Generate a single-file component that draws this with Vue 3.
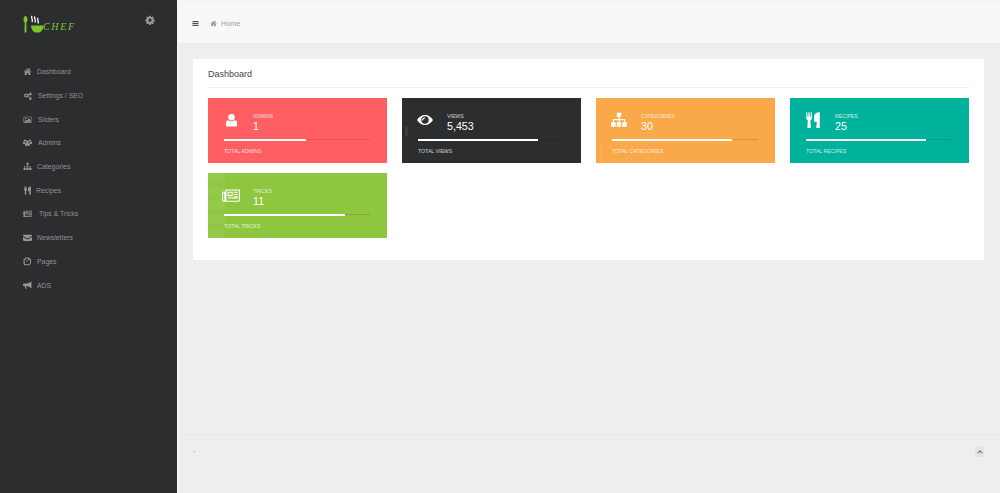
<script setup>
const nav = [
  { label: 'Dashboard', icon: 'home', gap: 5 },
  { label: 'Settings / SEO', icon: 'cogs', gap: 6 },
  { label: 'Sliders', icon: 'image', gap: 6 },
  { label: 'Admins', icon: 'users', gap: 6 },
  { label: 'Categories', icon: 'sitemap', gap: 5 },
  { label: 'Recipes', icon: 'cutlery', gap: 4 },
  { label: 'Tips & Tricks', icon: 'news', gap: 7 },
  { label: 'Newsletters', icon: 'mail', gap: 5 },
  { label: 'Pages', icon: 'pages', gap: 5 },
  { label: 'ADS', icon: 'bullhorn', gap: 5 },
]
const cards = [
  { title: 'ADMINS', value: '1', total: 'TOTAL ADMINS', icon: 'user', cls: 'red', pct: 56, size: 15, ml: 0 },
  { title: 'VIEWS', value: '5,453', total: 'TOTAL VIEWS', icon: 'eye', cls: 'dark', pct: 82, size: 16, ml: -1 },
  { title: 'CATEGORIES', value: '30', total: 'TOTAL CATEGORIES', icon: 'sitemap', cls: 'orange', pct: 82, size: 18, ml: -2 },
  { title: 'RECIPES', value: '25', total: 'TOTAL RECIPES', icon: 'cutlery', cls: 'teal', pct: 82, size: 18, ml: -2 },
  { title: 'TRICKS', value: '11', total: 'TOTAL TRICKS', icon: 'news', cls: 'green', pct: 83, size: 18, ml: -2 },
]
const icons = {
  home: 'M8 2 1 8l.8 1L8 4l6.200 5 .8-1-2.500-2.100V2.500h-2v1.700zM3 9.500V14h3.500v-3.500h3V14H13V9.500L8 5.300z',
  cogs: 'M5.500 4.500 7 4l.6 1.300 1.300.6L10 5.200l.8 1.300-.8.9v1.200l.8.9-.8 1.300-1.100-.7-1.300.6L7 12H5.500l-.5-1.300-1.300-.6-1.100.7-.8-1.300.8-.9V7.400l-.8-.9.8-1.300 1.100.7 1.300-.6zM6.200 6.800a1.500 1.500 0 1 0 .1 3 1.500 1.500 0 0 0-.1-3zM12.500 2l1 .3.100.9.700.5.800-.3.500 1-.6.600v.9l.6.600-.5 1-.8-.3-.7.500-.1.900h-1l-.3-.9-.7-.4-.8.300-.5-1 .6-.6v-.9l-.6-.6.500-1 .8.300.7-.4zM12.500 4.500a.9.9 0 1 0 .1 1.800.9.900 0 0 0-.1-1.800zM12.500 10l1 .3.100.8.700.5.800-.3.500 1-.6.600v.8l.6.600-.5 1-.8-.3-.7.500-.1.800h-1l-.3-.8-.7-.5-.8.300-.5-1 .6-.6v-.8l-.6-.6.500-1 .8.300.7-.5zM12.500 12a.9.900 0 1 0 .1 1.800.9.900 0 0 0-.1-1.800z',
  image: 'M1 3h14v11H1zM2 4v9h12V4zM5 5a1.300 1.300 0 1 1-.1 2.600A1.300 1.300 0 0 1 5 5zM3 12v-1.500L5 8.500l1.500 1.500 4-4L13 8.500V12z',
  users: 'M8 4a2.500 2.500 0 1 1 0 5 2.500 2.500 0 0 1 0-5zM3.500 2.500a1.800 1.800 0 1 1 0 3.600 1.800 1.800 0 0 1 0-3.600zM12.500 2.500a1.800 1.800 0 1 1 0 3.600 1.800 1.800 0 0 1 0-3.600zM0 7.500c0-1 1-1.200 1.800-1.200.6.500 1.300.7 2 .6.100.8.400 1.400 1 1.900-1 .3-1.900 1-2.200 1.700H.8C.3 10.500 0 10.200 0 9.700zM16 7.500c0-1-1-1.200-1.800-1.200-.6.500-1.300.7-2 .6-.100.8-.4 1.400-1 1.900 1 .3 1.900 1 2.200 1.700h1.800c.5 0 .8-.3.800-.8zM5.300 9c.8.700 4.600.7 5.400 0 1.200.2 1.800 1 1.800 2.500v1c0 .8-.5 1.200-1.200 1.200H4.700c-.7 0-1.200-.4-1.200-1.200v-1C3.500 10 4.100 9.200 5.300 9z',
  sitemap: 'M6 1.500h4v3.500H8.600v2.200h4.900V10H15v4h-4v-4h1.500V8.200h-4V10H10v4H6v-4h1.500V8.200h-4V10H5v4H1v-4h1.500V7.200h4.900V5H6z',
  cutlery: 'M2 1h.9l.2 4h.7l.2-4h1l.2 4h.7l.2-4H7v5.500c0 .9-.6 1.600-1.300 1.800L6 15H3l.4-6.700C2.700 8.100 2 7.400 2 6.500zM14 1v14h-3l.3-5.500H9V4.500C9 2.500 11 1 14 1z',
  news: 'M3 3h13v9.500c0 .8-.6 1.500-1.500 1.500h-13C.6 14 0 13.300 0 12.500V5h3zM4 4v8.500c0 .2 0 .4-.1.500h10.600c.3 0 .5-.2.500-.5V4zM1 6v6.500c0 .3.200.5.500.5s.5-.2.500-.5V6zM5 5h4.500v4H5zM6 6v2h2.500V6zM10.500 5H14v1h-3.500zM10.500 7H14v1h-3.500zM10.500 9H14v.9h-3.500zM5 10.300h9v.9H5z',
  mail: 'M1.500 3h13c.8 0 1.500.6 1.500 1.400 0 .6-.4 1.100-.9 1.400L8.800 9.500c-.5.300-1 .3-1.500 0L.9 5.800C.4 5.500 0 5 0 4.400 0 3.600.7 3 1.500 3zM0 7l7 4.200c.7.400 1.300.4 2 0L16 7v5.500c0 .8-.7 1.500-1.500 1.500h-13C.7 14 0 13.300 0 12.500z',
  pages: 'M4 1.500 10.500 1l4 4-.5 6.500L11 14.500H3L1 12V4.500zM5 3 3 5v6.500L4 13h6.500l2-2V6L9 2.800z M5 7l6-3 .8 1-6 3z',
  bullhorn: 'M14 1.500h1v11h-1l-3-2.500c-1.500-1-3-1.300-4-1.300H5.500l1.200 5H4.500L3 8.700H1.500C.7 8.700 0 8 0 7V6c0-1 .7-1.700 1.500-1.700H7c1 0 2.500-.3 4-1.300z',
  user: 'M8 1a3.500 3.500 0 1 1 0 7 3.500 3.500 0 0 1 0-7zM4.500 7.800C5.400 8.600 6.600 9 8 9s2.600-.4 3.500-1.200c1.800.2 2.500 1.700 2.500 3.700v1.200c0 1-.7 1.800-1.700 1.800H3.700C2.700 14.500 2 13.700 2 12.700v-1.200c0-2 .7-3.500 2.500-3.700z',
  eye: 'M8 3c3.400 0 6.300 2.100 8 5-1.700 2.900-4.600 5-8 5S1.700 10.900 0 8c1.700-2.900 4.600-5 8-5zM8 4.300a3.700 3.700 0 1 0 0 7.400 3.700 3.700 0 0 0 0-7.400zM7.500 5.500a.6.600 0 0 1 0 1.200C6.800 6.700 6.300 7.300 6.300 8a.6.6 0 0 1-1.200 0c0-1.400 1-2.500 2.400-2.500z',
  gear: 'M6.800 1h2.400l.4 2 1.200.5 1.700-1.100 1.700 1.700-1.100 1.700.5 1.200 2 .4v2.400l-2 .4-.5 1.200 1.100 1.700-1.700 1.700-1.700-1.100-1.200.5-.4 2H6.800l-.4-2-1.200-.5-1.700 1.100-1.700-1.700 1.100-1.700-.5-1.200-2-.4V7.200l2-.4.5-1.200-1.100-1.700 1.700-1.700 1.700 1.100 1.200-.5zM8 5.700a2.500 2.500 0 1 0 0 5 2.500 2.500 0 0 0 0-5z',
  bars: 'M1 2.500h14v2.400H1zM1 6.800h14v2.400H1zM1 11.100h14v2.400H1z',
}
</script>

<template>
  <div class="app">
    <aside class="sidebar">
      <div class="brand">
        <div class="logo" role="img" aria-label="Chef logo">
          <svg width="22" height="19" viewBox="0 0 22 19" class="logo-mark">
            <path d="M2.500 1C1.300 1 .500 2.800.500 4.700c0 1.400.8 2.300 1.200 2.800L1.500 17.500h2L3.300 7.500c.5-.5 1.200-1.400 1.200-2.800C4.500 2.800 3.700 1 2.500 1z" fill="#7cc52b" />
            <path d="M9 1c-1.500 2 1.500 3.500 0 6M12 1.500c-1.500 2 1.500 3.500 0 6M15 3c-1.300 1.800 1.300 3 0 5.500" stroke="#fff" stroke-width="1.300" fill="none" />
            <path d="M8 10.500h12.500c0 3.500-2 6-4 7h-4.500c-2-1-4-3.500-4-7z" fill="#7cc52b" />
          </svg>
          <span class="logo-text">CHEF</span>
        </div>
        <svg class="gear" viewBox="0 0 16 16"><path :d="icons.gear" fill-rule="evenodd" /></svg>
      </div>
      <nav class="nav">
        <a v-for="item in nav" :key="item.label" class="nav-item" :style="{ gap: item.gap + 'px' }">
          <svg class="nav-icon" viewBox="0 0 16 16"><path :d="icons[item.icon]" fill-rule="evenodd" /></svg>
          <span>{{ item.label }}</span>
        </a>
      </nav>
    </aside>

    <main class="main">
      <header class="topbar">
        <svg class="bars" viewBox="0 0 16 16"><path :d="icons.bars" /></svg>
        <svg class="crumb-icon" viewBox="0 0 16 16"><path :d="icons.home" fill-rule="evenodd" /></svg>
        <span class="crumb">Home</span>
      </header>

      <section class="content">
        <div class="panel">
          <h1 class="panel-title">Dashboard</h1>
          <div class="grid">
            <article v-for="c in cards" :key="c.title" class="card" :class="c.cls">
              <div class="card-top">
                <div class="icon-box">
                  <svg class="card-icon" viewBox="0 0 16 16" :style="{ width: c.size + 'px', height: c.size + 'px', marginLeft: c.ml + 'px' }"><path :d="icons[c.icon]" fill-rule="evenodd" /></svg>
                </div>
                <div class="card-text">
                  <div class="card-title">{{ c.title }}</div>
                  <div class="card-value">{{ c.value }}</div>
                </div>
              </div>
              <div class="track"><div class="fill" :style="{ width: c.pct + '%' }"></div></div>
              <div class="card-total">{{ c.total }}</div>
            </article>
          </div>
        </div>
      </section>

      <footer class="footer">
        <span class="dot">.</span>
        <span class="up"><svg viewBox="0 0 8 8" width="6" height="6"><path d="M1 5.500 4 2.500l3 3" stroke="#777" stroke-width="1.500" fill="none" /></svg></span>
      </footer>
    </main>
  </div>
</template>

<style>
html, body { margin: 0; background: #eeeeee; }
</style>

<style scoped>
.app {
  display: flex;
  height: 493px;
  overflow: hidden;
  font-family: "Liberation Sans", Arial, sans-serif;
}
.sidebar {
  width: 177px;
  flex: none;
  background: #2c2d2f;
  color: #8d8f91;
}
.brand {
  height: 60px;
  padding: 15px 22px 0 23px;
  box-sizing: border-box;
  display: flex;
  justify-content: space-between;
  align-items: flex-start;
}
.logo { display: flex; align-items: flex-start; }
.logo-mark { display: block; }
.logo-text {
  margin: 6px 0 0 -2px;
  font: italic 10px/12px "Liberation Serif", serif;
  letter-spacing: 1.700px;
  color: #7cc52b;
}
.gear { width: 10px; height: 10px; fill: #98999b; }
.nav-item {
  height: 23.700px;
  display: flex;
  align-items: center;
  padding-left: 23px;
  font-size: 6.900px;
  color: #919294;
}
.nav-icon { width: 9px; height: 9px; flex: none; fill: #97989a; }
.main {
  flex: 1;
  min-width: 0;
  display: flex;
  flex-direction: column;
  background: #eeeeee;
  border-left: 1px solid #f7f7f7;
}
.topbar {
  height: 43px;
  flex: none;
  background: #f8f8f8;
  border-top: 1px solid #f3f3f3;
  display: flex;
  align-items: center;
  padding: 3px 0 0 14px;
  box-sizing: border-box;
}
.bars { width: 7px; height: 7px; fill: #555; }
.crumb-icon { width: 7px; height: 7px; fill: #888; margin-left: 11px; }
.crumb { margin-left: 4px; font-size: 7.200px; color: #a0a0a0; }
.content {
  flex: 1;
  padding: 16px 16px 0 15px;
}
.panel {
  background: #fff;
  height: 201px;
  padding: 0 15px;
  box-sizing: border-box;
}
.panel-title {
  margin: 0;
  height: 28px;
  line-height: 30px;
  font-size: 9px;
  font-weight: 400;
  color: #444;
  border-bottom: 1px solid #efefef;
}
.grid {
  display: grid;
  grid-template-columns: repeat(4, 179px);
  column-gap: 15px;
  row-gap: 10px;
  padding-top: 10px;
}
.card {
  height: 65px;
  box-sizing: border-box;
  padding: 14px 16px 0;
  color: #fff;
  position: relative;
  overflow: hidden;
}
.green::before {
  content: "";
  position: absolute;
  left: 0;
  top: 0;
  bottom: 0;
  width: 17px;
  background: repeating-linear-gradient(180deg, rgba(255, 255, 255, .06) 0 9px, rgba(255, 255, 255, .02) 9px 14px);
}
.dark::before {
  content: "";
  position: absolute;
  left: 3px;
  top: 29px;
  width: 3px;
  height: 9px;
  background: rgba(255, 255, 255, .08);
}
.orange::before {
  content: "";
  position: absolute;
  left: 4px;
  top: 46px;
  bottom: 0;
  width: 3px;
  background: rgba(255, 255, 255, .07);
}
.red { background: #ff5f63; }
.dark { background: #2b2d2f; }
.orange { background: #f9a94a; }
.teal { background: #00b29c; }
.green { background: #8ec63f; }
.card-top { display: flex; height: 27px; position: relative; }
.icon-box { width: 29px; height: 16px; flex: none; display: flex; align-items: center; }
.card-icon { fill: #fff; flex: none; }
.card-title { font-size: 5.200px; line-height: 8px; opacity: .75; }
.card-value { font-size: 10.700px; line-height: 12px; }
.track {
  height: 1px;
  width: 146px;
  background: rgba(0, 0, 0, .12);
  position: relative;
}
.fill { height: 1.500px; background: #fff; }
.card-total { margin-top: 7px; font-size: 5.200px; line-height: 8px; opacity: .75; position: relative; }
.footer {
  height: 59px;
  flex: none;
  border-top: 1px solid #e8e8e8;
  display: flex;
  justify-content: space-between;
  padding: 10px 16px 0 15px;
  box-sizing: border-box;
  font-size: 8px;
  color: #777;
}
.up {
  width: 9px;
  height: 11px;
  background: #e4e4e4;
  border-radius: 1px;
  display: flex;
  align-items: center;
  justify-content: center;
  margin-top: 1px;
}
</style>
